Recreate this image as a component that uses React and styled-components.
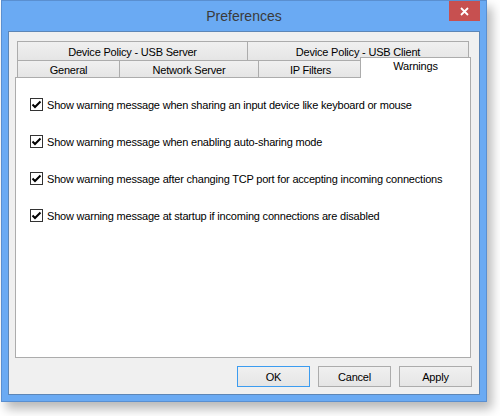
import React from 'react';
import styled, {createGlobalStyle} from 'styled-components';

const GlobalStyle = createGlobalStyle`
  html, body {
    margin: 0;
    padding: 0;
    background: #ffffff;
  }
  body {
    font-family: "Liberation Sans", Arial, sans-serif;
    font-size: 11px;
    letter-spacing: -0.2px;
    color: #000;
  }
`

const Page = styled.div`
  width: 500px;
  height: 416px;
  padding: 0 0 0 1px;
  box-sizing: border-box;
`

const Window = styled.div`
  width: 486px;
  height: 402px;
  box-sizing: border-box;
  background: #6aaaf3;
  border: 1px solid #5a8fd0;
  box-shadow: 5px 7px 10px rgba(0, 0, 0, 0.28);
  display: flex;
  flex-direction: column;
`

const TitleBar = styled.div`
  height: 30px;
  display: grid;
  grid-template-columns: 1fr auto 1fr;
`

const Title = styled.div`
  grid-column: 2;
  align-self: center;
  font-size: 14px;
  letter-spacing: 0;
  color: #3a3a3a;
  margin-top: -1px;
`

const CloseButton = styled.div`
  grid-column: 3;
  justify-self: end;
  align-self: start;
  width: 31px;
  height: 20px;
  margin-right: 6px;
  background: #c75050;
  display: flex;
  align-items: center;
  justify-content: center;
`

const Client = styled.div`
  flex: 1;
  margin: 0 6px 6px;
  background: #f0f0f0;
  border: 1px solid #5d86b6;
  display: flex;
  flex-direction: column;
  padding: 9px 7px 7px 6px;
`

const TabControl = styled.div`
  flex: 1;
  display: flex;
  flex-direction: column;
  margin-right: 1px;
`

const TabRow = styled.div`
  display: flex;
  padding-left: 2px;
  height: ${p => p.$h}px;
`

const Tab = styled.div`
  width: ${p => p.$w}px;
  box-sizing: border-box;
  border: 1px solid #acacac;
  border-bottom: none;
  background: linear-gradient(#f0f0f0, #e5e5e5);
  display: flex;
  align-items: center;
  justify-content: center;
  padding-top: 1px;
  & + & {
    margin-left: -1px;
  }
`

const ActiveTab = styled.div`
  width: ${p => p.$w}px;
  height: 21px;
  box-sizing: border-box;
  margin: -3px 0 0 -3px;
  border: 1px solid #acacac;
  border-bottom: none;
  background: #ffffff;
  position: relative;
  z-index: 1;
  display: flex;
  justify-content: center;
  padding-top: 2px;
`

const Panel = styled.div`
  flex: 1;
  background: #ffffff;
  border: 1px solid #acacac;
  display: flex;
  flex-direction: column;
  gap: 24px;
  padding: 20px 0 0 14px;
`

const CheckRow = styled.label`
  display: flex;
  align-items: center;
  height: 13px;
  gap: 4px;
  white-space: nowrap;
`

const Box = styled.span`
  width: 13px;
  height: 13px;
  box-sizing: border-box;
  border: 1px solid #333333;
  background: #ffffff;
  display: flex;
  align-items: center;
  justify-content: center;
  flex: none;
`

const ButtonRow = styled.div`
  display: flex;
  justify-content: flex-end;
  gap: 8px;
  margin-top: 8px;
`

const Button = styled.div`
  width: 73px;
  height: 21px;
  box-sizing: border-box;
  border: 1px solid ${p => (p.$default ? '#3c9cf0' : '#acacac')};
  background: linear-gradient(#f0f0f0, #e5e5e5);
  display: flex;
  align-items: center;
  justify-content: center;
`

const Check = () => (
  <Box>
    <svg width="11" height="11" viewBox="0 0 11 11">
      <path d="M1.5 5.5 L4 8 L9.5 2.5" fill="none" stroke="#000" strokeWidth="2" />
    </svg>
  </Box>
)

const warnings = [
  'Show warning message when sharing an input device like keyboard or mouse',
  'Show warning message when enabling auto-sharing mode',
  'Show warning message after changing TCP port for accepting incoming connections',
  'Show warning message at startup if incoming connections are disabled',
]

export default function App() {
  return (
    <Page>
      <GlobalStyle />
      <Window>
        <TitleBar>
          <Title>Preferences</Title>
          <CloseButton>
            <svg width="9" height="9" viewBox="0 0 9 9">
              <path d="M1 1 L8 8 M8 1 L1 8" stroke="#fff" strokeWidth="1.8" />
            </svg>
          </CloseButton>
        </TitleBar>
        <Client>
          <TabControl>
            <TabRow $h={19}>
              <Tab $w={231}>Device Policy - USB Server</Tab>
              <Tab $w={222}>Device Policy - USB Client</Tab>
            </TabRow>
            <TabRow $h={17}>
              <Tab $w={103}>General</Tab>
              <Tab $w={140}>Network Server</Tab>
              <Tab $w={105}>IP Filters</Tab>
              <ActiveTab $w={111}>Warnings</ActiveTab>
            </TabRow>
            <Panel>
              {warnings.map(text => (
                <CheckRow key={text}>
                  <Check />
                  {text}
                </CheckRow>
              ))}
            </Panel>
          </TabControl>
          <ButtonRow>
            <Button $default>OK</Button>
            <Button>Cancel</Button>
            <Button>Apply</Button>
          </ButtonRow>
        </Client>
      </Window>
    </Page>
  );
}
